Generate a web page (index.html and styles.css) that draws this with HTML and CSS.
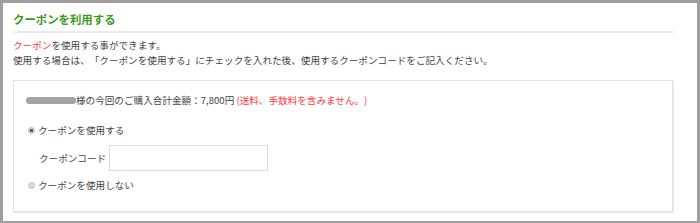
FILE: index.html
```html
<!DOCTYPE html>
<html lang="ja">

<head>
    <meta charset="UTF-8">
    <meta name="viewport" content="width=device-width, initial-scale=1.0">
    <title>クーポンを利用する</title>
    <link rel="stylesheet" href="styles.css">
</head>

<body>

    <div class="frame">
        <h2 class="title">クーポンを利用する</h2>

        <p class="intro">
            <span class="red">クーポン</span>を使用する事ができます。<br>
            使用する場合は、「クーポンを使用する」にチェックを入れた後、使用するクーポンコードをご記入ください。
        </p>

        <div class="box">
            <div class="total">
                <span class="name"></span>様の今回のご購入合計金額：7,800円 <span class="red">(送料、手数料を含みません。)</span>
            </div>

            <label class="option">
                <span class="radio checked"></span>クーポンを使用する
            </label>

            <div class="code-row">
                <label for="coupon" class="code-label">クーポンコード</label>
                <input type="text" id="coupon" class="code-input">
            </div>

            <label class="option">
                <span class="radio"></span>クーポンを使用しない
            </label>
        </div>
    </div>

</body>

</html>
```

FILE: styles.css
```css
body {
    margin: 0;
    font-family: "Noto Sans CJK JP", "Noto Sans", sans-serif;
    font-size: 9.6px;
    color: #444;
    background-color: #fff;
    text-spacing-trim: space-all;
}

.frame {
    height: 223px;
    box-sizing: border-box;
    border: 3px solid #a0a0a0;
    border-bottom-width: 2px;
    padding: 0 24px 0 10px;
}

.title {
    margin: 0;
    padding: 6px 0 2px 0;
    line-height: 20px;
    font-size: 11.4px;
    font-weight: bold;
    color: #3a9a1a;
    border-bottom: 2px solid #ebebeb;
}

.intro {
    margin: 5px 0 0 0;
    line-height: 15px;
}

.red {
    color: #ff3b3b;
}

.box {
    margin-top: 12px;
    border: 1px solid #e3e3e3;
    box-shadow: 1px 1px 0 #ececec;
    padding: 12px 12px 18px 12px;
}

.total {
    line-height: 15px;
    display: flex;
    align-items: center;
    white-space: pre;
}

.name {
    display: inline-block;
    width: 50px;
    height: 7px;
    border-radius: 4px;
    background-color: #a3a3a3;
    filter: blur(0.6px);
}

.option {
    display: flex;
    align-items: center;
    line-height: 15px;
    margin-top: 15px;
    padding-left: 2px;
}

.option:last-child {
    margin-top: 7px;
}

.radio {
    width: 7px;
    height: 7px;
    box-sizing: border-box;
    border-radius: 50%;
    border: 1px solid #c4c4c4;
    background-color: #d8d8d8;
    margin-right: 3px;
}

.radio.checked {
    border-color: #b0b0b0;
    background: radial-gradient(circle, #555 0 1.6px, #e4e4e4 2px);
}

.code-row {
    display: flex;
    align-items: center;
    gap: 3px;
    margin-top: 7px;
    padding-left: 13px;
}

.code-input {
    width: 159px;
    height: 26px;
    box-sizing: border-box;
    border: 1px solid #dcdcdc;
    margin: 0;
    padding: 0 4px;
}
```
